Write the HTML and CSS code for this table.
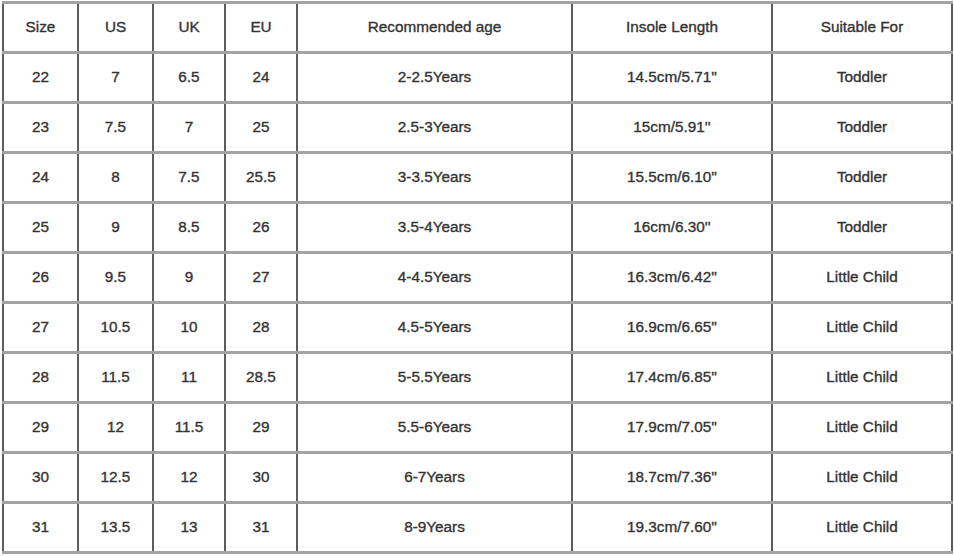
FILE: index.html
```html
<!DOCTYPE html>
<html>
<head>
<meta charset="utf-8">
<link rel="stylesheet" href="styles.css">
</head>
<body>
<table class="size-table">
  <colgroup>
    <col class="c-size"><col class="c-us"><col class="c-uk"><col class="c-eu"><col class="c-age"><col class="c-insole"><col class="c-for">
  </colgroup>
  <thead>
    <tr><th>Size</th><th>US</th><th>UK</th><th>EU</th><th>Recommended age</th><th>Insole Length</th><th>Suitable For</th></tr>
  </thead>
  <tbody>
    <tr><td>22</td><td>7</td><td>6.5</td><td>24</td><td>2-2.5Years</td><td>14.5cm/5.71''</td><td>Toddler</td></tr>
    <tr><td>23</td><td>7.5</td><td>7</td><td>25</td><td>2.5-3Years</td><td>15cm/5.91''</td><td>Toddler</td></tr>
    <tr><td>24</td><td>8</td><td>7.5</td><td>25.5</td><td>3-3.5Years</td><td>15.5cm/6.10''</td><td>Toddler</td></tr>
    <tr><td>25</td><td>9</td><td>8.5</td><td>26</td><td>3.5-4Years</td><td>16cm/6.30''</td><td>Toddler</td></tr>
    <tr><td>26</td><td>9.5</td><td>9</td><td>27</td><td>4-4.5Years</td><td>16.3cm/6.42''</td><td>Little Child</td></tr>
    <tr><td>27</td><td>10.5</td><td>10</td><td>28</td><td>4.5-5Years</td><td>16.9cm/6.65''</td><td>Little Child</td></tr>
    <tr><td>28</td><td>11.5</td><td>11</td><td>28.5</td><td>5-5.5Years</td><td>17.4cm/6.85''</td><td>Little Child</td></tr>
    <tr><td>29</td><td>12</td><td>11.5</td><td>29</td><td>5.5-6Years</td><td>17.9cm/7.05''</td><td>Little Child</td></tr>
    <tr><td>30</td><td>12.5</td><td>12</td><td>30</td><td>6-7Years</td><td>18.7cm/7.36''</td><td>Little Child</td></tr>
    <tr><td>31</td><td>13.5</td><td>13</td><td>31</td><td>8-9Years</td><td>19.3cm/7.60''</td><td>Little Child</td></tr>
  </tbody>
</table>
</body>
</html>
```
FILE: styles.css
```css
html, body {
  margin: 0;
  padding: 0;
  background: #ffffff;
}
body {
  padding: 1px 0 0 2px;
  font-family: "Liberation Sans", Arial, sans-serif;
}
.size-table {
  border-collapse: collapse;
  table-layout: fixed;
  width: 949px;
}
.c-size { width: 75px; }
.c-us { width: 75px; }
.c-uk { width: 72px; }
.c-eu { width: 72px; }
.c-age { width: 275px; }
.c-insole { width: 200px; }
.c-for { width: 180px; }
.size-table th,
.size-table td {
  height: 46px;
  padding: 0 0 1px 0;
  text-align: center;
  vertical-align: middle;
  font-size: 15.3px;
  font-weight: normal;
  color: #333333;
  -webkit-text-stroke: 0.35px #333333;
  border-left: 2px solid #5c5c5c;
  border-right: 2px solid #5c5c5c;
  border-top: 3px solid #a3a3a3;
  border-bottom: 3px solid #a3a3a3;
}
```
